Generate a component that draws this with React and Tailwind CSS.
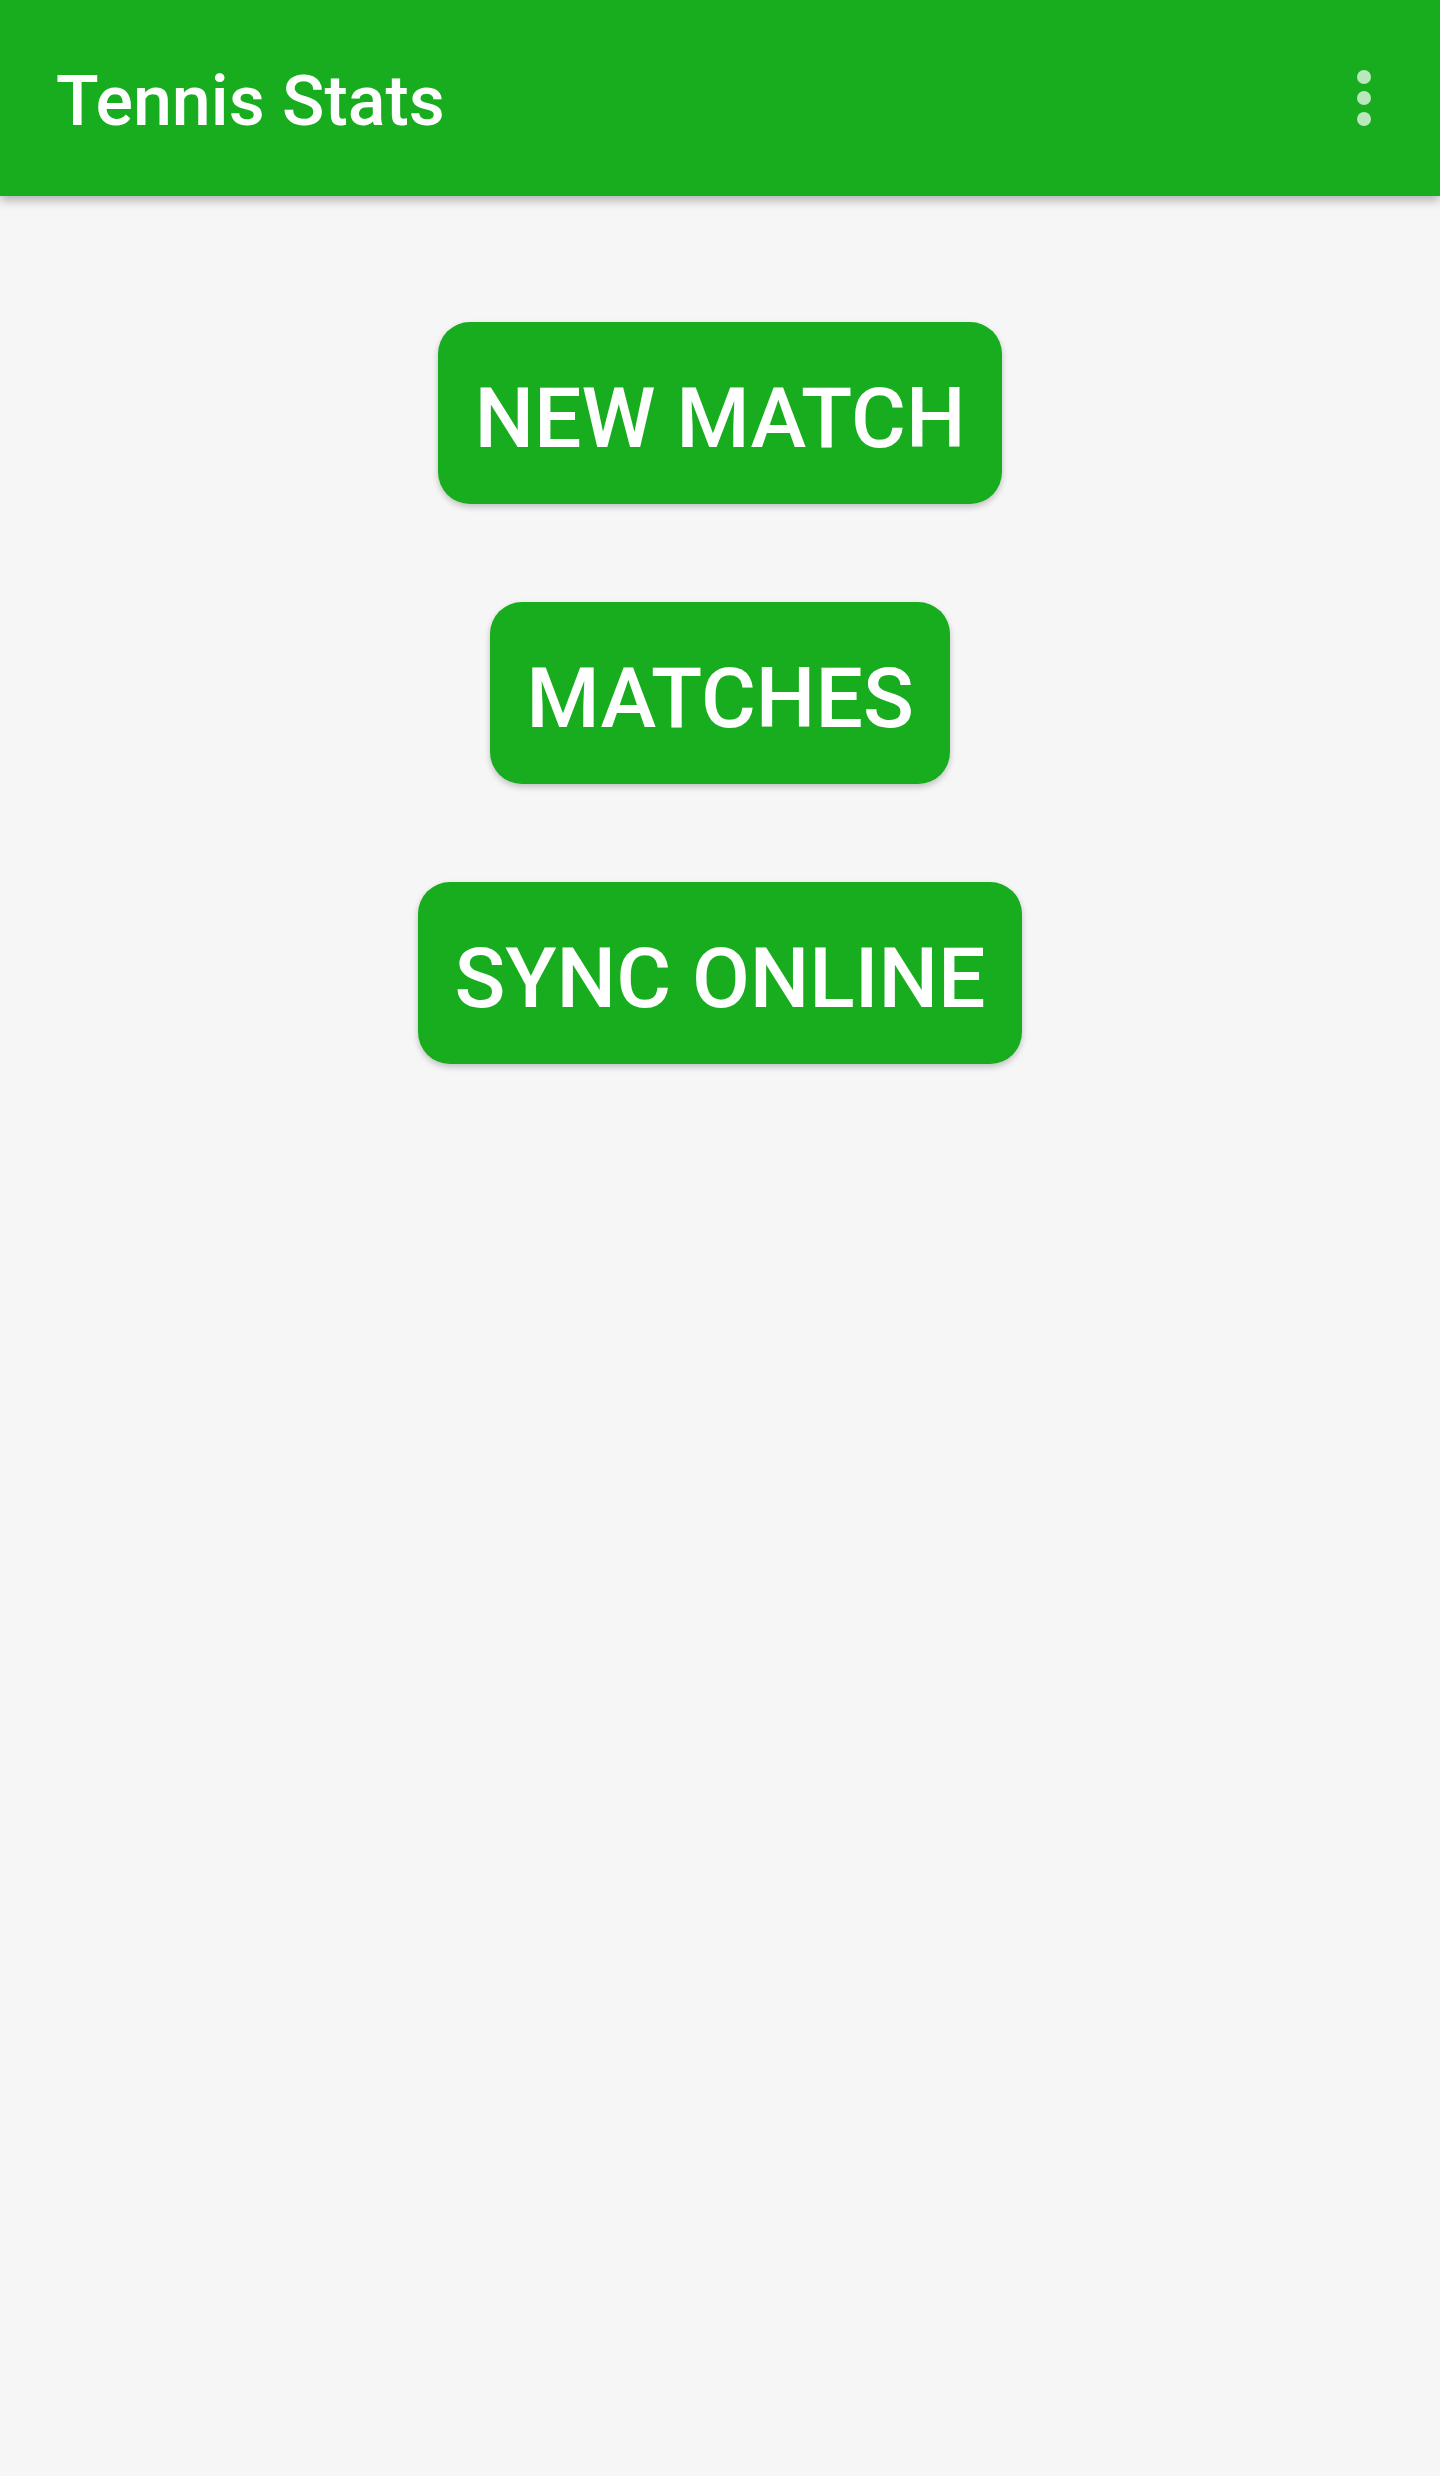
export default function App() {
  const btn =
    "rounded-[32px] bg-[#18ad1e] h-[182px] px-[36px] pt-[12px] flex items-center justify-center text-white text-[84px] font-medium leading-none shadow-[0_3px_6px_rgba(0,0,0,0.22)]";
  return (
    <div
      className="w-[1440px] h-[2476px] bg-[#f6f6f6] flex flex-col"
      style={{ fontFamily: "Roboto, 'Noto Sans', sans-serif" }}
    >
      <header className="relative z-10 h-[196px] bg-[#18ad1e] flex items-center justify-between pl-[56px] pr-[69px] shadow-[0_4px_10px_rgba(0,0,0,0.3)]">
        <h1 className="text-white text-[70px] font-medium leading-none pt-[6px]">Tennis Stats</h1>
        <div className="flex flex-col gap-[7px] items-center">
          <span className="block w-[14px] h-[14px] rounded-full bg-white/70"></span>
          <span className="block w-[14px] h-[14px] rounded-full bg-white/70"></span>
          <span className="block w-[14px] h-[14px] rounded-full bg-white/70"></span>
        </div>
      </header>
      <main className="flex flex-col items-center gap-[98px] pt-[126px]">
        <button className={btn}>NEW MATCH</button>
        <button className={btn}>MATCHES</button>
        <button className={btn}>SYNC ONLINE</button>
      </main>
    </div>
  );
}
